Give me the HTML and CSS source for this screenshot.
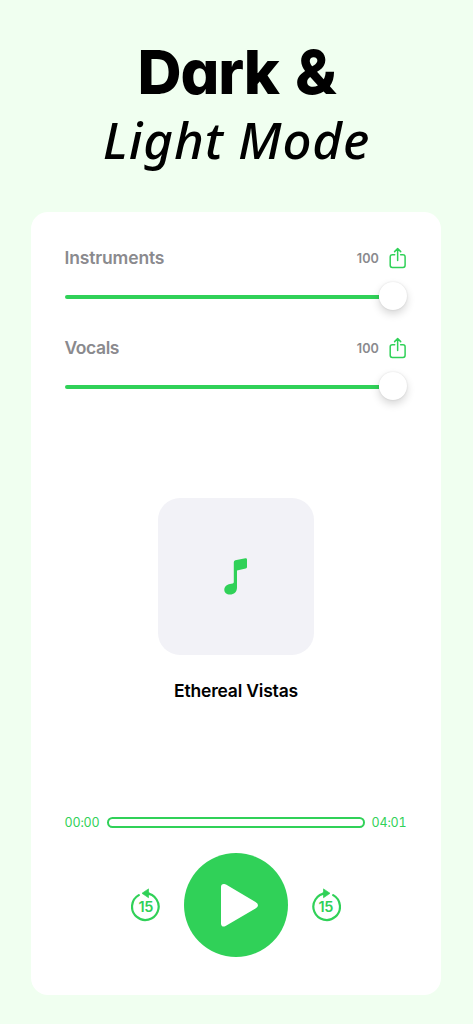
FILE: index.html
```html
<!DOCTYPE html>
<html lang="en">
<head>
<meta charset="utf-8">
<title>Dark &amp; Light Mode</title>
<link rel="stylesheet" href="styles.css">
</head>
<body>
<h1 class="title"><span class="title-bold">Dark &amp;</span><span class="title-light">Light Mode</span></h1>
<main class="card">
  <section class="track">
    <div class="track-head">
      <span class="track-name instruments">Instruments</span><span class="track-value">100</span>
      <svg class="share" viewBox="0 0 18 22"><path d="M5.7 7.7H3.3Q1.2 7.7 1.2 9.8V18.3Q1.2 20.4 3.3 20.4H14Q16.1 20.4 16.1 18.3V9.8Q16.1 7.7 14 7.7H11.6M8.65 13.4V1.7M5.6 4.6L8.65 1.5L11.7 4.6"/></svg>
    </div>
    <div class="slider"><div class="slider-line"></div><div class="thumb"></div></div>
  </section>
  <section class="track">
    <div class="track-head">
      <span class="track-name vocals">Vocals</span><span class="track-value">100</span>
      <svg class="share" viewBox="0 0 18 22"><path d="M5.7 7.7H3.3Q1.2 7.7 1.2 9.8V18.3Q1.2 20.4 3.3 20.4H14Q16.1 20.4 16.1 18.3V9.8Q16.1 7.7 14 7.7H11.6M8.65 13.4V1.7M5.6 4.6L8.65 1.5L11.7 4.6"/></svg>
    </div>
    <div class="slider"><div class="slider-line"></div><div class="thumb"></div></div>
  </section>
  <div class="artwork">
    <svg class="note" viewBox="0 0 24 38"><path d="M9.8 4.2Q9.8 2.6 11.3 2.2L21.4.2Q23 0 23 1.5V9Q23 10.3 21.7 10.6L13 12.4V29.5C13 34 10 36.6 5.9 36.6C2.6 36.6.3 34.6.3 31.8C.3 28.8 2.7 26.6 6 26L8.7 25.4Q9.8 25.2 9.8 24Z"/></svg>
  </div>
  <p class="song">Ethereal Vistas</p>
  <div class="progress"><span class="time">00:00</span><div class="bar"></div><span class="time">04:01</span></div>
  <div class="controls">
    <svg class="skip" viewBox="0 0 30 34"><path class="ring" d="M7.8 7.1A13.3 13.3 0 1 0 15 5.4"/><path class="head" d="M11 5.3L17.5.9V9.7Z"/><path class="ring" d="M15 5.3L18 5.7"/><text x="14.8" y="23.9">15</text></svg>
    <svg class="play" viewBox="0 0 104 104"><circle cx="52" cy="52" r="52"/><path d="M37 34Q37 30.6 40.3 30.9Q41 31 42 31.6L71.5 49Q74 50.3 74 52.2Q74 54 71.5 55.4L42 72.8Q41 73.4 40.3 73.5Q37 73.8 37 70.4Z"/></svg>
    <svg class="skip" viewBox="0 0 30 34"><path class="ring" d="M22.2 7.1A13.3 13.3 0 1 1 15 5.4"/><path class="head" d="M19 5.3L12.5.9V9.7Z"/><path class="ring" d="M15 5.3L12 5.7"/><text x="14.8" y="23.9">15</text></svg>
  </div>
</main>
</body>
</html>
```
FILE: styles.css
```css
* { box-sizing: border-box; }
body {
  margin: 0;
  height: 1024px;
  background: #f0fff0;
  font-family: Inter, "Liberation Sans", sans-serif;
  display: flex;
  flex-direction: column;
  align-items: center;
  overflow: hidden;
}
.title {
  margin: 0;
  height: 212px;
  flex: none;
  padding-top: 38px;
  display: flex;
  flex-direction: column;
  align-items: center;
  color: #000;
  white-space: nowrap;
}
.title-bold {
  font-size: 61px;
  line-height: 68px;
  font-weight: 800;
  letter-spacing: -1.1px;
  word-spacing: 4px;
  font-feature-settings: "cv11";
}
.title-light {
  font: italic 500 51px/66px "Noto Sans", sans-serif;
  letter-spacing: .9px;
}
.card {
  flex: none;
  width: 410px;
  height: 783px;
  padding: 34px 34px 0;
  background: #fff;
  border-radius: 17px;
  display: flex;
  flex-direction: column;
  align-items: center;
  margin-right: 1px;
}
.track { width: 342px; height: 90.4px; flex: none; }
.track-head {
  height: 24px;
  display: flex;
  align-items: center;
  color: #8a8a8e;
}
.track-name { font-size: 17.5px; line-height: 22px; font-weight: 600; flex: 1; margin-left: -.5px; }
.instruments { letter-spacing: -.15px; }
.vocals { letter-spacing: -.4px; }
.track-value { font-size: 12.6px; font-weight: 600; letter-spacing: .1px; margin-right: 10px; }
.share {
  width: 18px;
  height: 22px;
  fill: none;
  stroke: #30d158;
  stroke-width: 1.5;
  stroke-linecap: round;
  stroke-linejoin: round;
}
.slider {
  display: flex;
  align-items: center;
  margin-top: 12px;
  height: 28px;
}
.slider-line { flex: 1; height: 4px; margin: 2px 0 0; border-radius: 2px 0 0 2px; background: #30d158; }
.thumb {
  width: 28px;
  height: 28px;
  border-radius: 50%;
  background: #fff;
  box-shadow: 0 4px 9px rgba(0,0,0,.16), 0 0 2px rgba(0,0,0,.12);
}
.artwork {
  flex: none;
  width: 156px;
  height: 157px;
  margin: 71.5px 1px 0 0;
  border-radius: 22px;
  background: #f2f2f7;
  display: flex;
  align-items: center;
  justify-content: center;
}
.note { width: 24px; height: 38px; fill: #30d158; }
.song {
  margin: 24px 0 0;
  font-size: 17.5px;
  line-height: 24px;
  font-weight: 600;
  letter-spacing: -.2px;
  color: #000;
}
.progress {
  width: 342px;
  height: 16px;
  margin: 111px 1px 0 0;
  display: flex;
  align-items: center;
  justify-content: space-between;
  color: #30d158;
}
.time { width: 35px; font-size: 12.5px; letter-spacing: -.15px; font-variant-numeric: tabular-nums; white-space: nowrap; }
.bar { width: 258px; height: 11px; border: 2px solid #30d158; border-radius: 6px; }
.controls {
  margin: 23px 1px 0 0;
  display: flex;
  align-items: center;
  gap: 23px;
}
.skip { width: 30px; height: 34px; }
.ring { fill: none; stroke: #30d158; stroke-width: 2.2; stroke-linecap: round; }
.head { fill: #30d158; stroke: #30d158; stroke-width: .7; stroke-linejoin: round; }
.skip text { fill: #30d158; font-size: 14.5px; font-weight: 600; text-anchor: middle; letter-spacing: -.3px; }
.play { width: 104px; height: 104px; }
.play circle { fill: #30d158; }
.play path { fill: #fff; }
```
